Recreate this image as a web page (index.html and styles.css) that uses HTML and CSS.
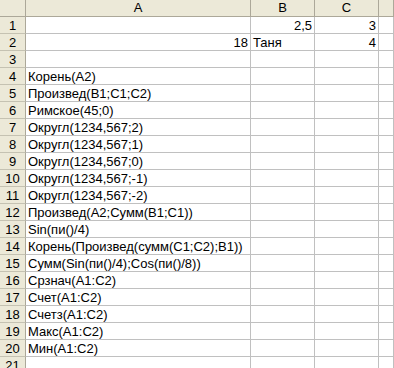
FILE: index.html
```
<!DOCTYPE html>
<html lang="ru">
<head>
    <meta charset="UTF-8">
    <meta name="viewport" content="width=device-width, initial-scale=1.0">
    <title>Лист1</title>
    <link rel="stylesheet" href="styles.css">
</head>
<body>
    <div class="sheet">
        <div class="row head">
            <div class="corner"></div>
            <div class="col-head">A</div>
            <div class="col-head">B</div>
            <div class="col-head">C</div>
            <div class="col-head"></div>
        </div>
        <div class="row"><div class="num">1</div><div class="cell"></div><div class="cell right">2,5</div><div class="cell right">3</div><div class="cell"></div></div>
        <div class="row"><div class="num">2</div><div class="cell right">18</div><div class="cell">Таня</div><div class="cell right">4</div><div class="cell"></div></div>
        <div class="row"><div class="num">3</div><div class="cell"></div><div class="cell"></div><div class="cell"></div><div class="cell"></div></div>
        <div class="row"><div class="num">4</div><div class="cell">Корень(A2)</div><div class="cell"></div><div class="cell"></div><div class="cell"></div></div>
        <div class="row"><div class="num">5</div><div class="cell">Произвед(B1;C1;C2)</div><div class="cell"></div><div class="cell"></div><div class="cell"></div></div>
        <div class="row"><div class="num">6</div><div class="cell">Римское(45;0)</div><div class="cell"></div><div class="cell"></div><div class="cell"></div></div>
        <div class="row"><div class="num">7</div><div class="cell">Округл(1234,567;2)</div><div class="cell"></div><div class="cell"></div><div class="cell"></div></div>
        <div class="row"><div class="num">8</div><div class="cell">Округл(1234,567;1)</div><div class="cell"></div><div class="cell"></div><div class="cell"></div></div>
        <div class="row"><div class="num">9</div><div class="cell">Округл(1234,567;0)</div><div class="cell"></div><div class="cell"></div><div class="cell"></div></div>
        <div class="row"><div class="num">10</div><div class="cell">Округл(1234,567;-1)</div><div class="cell"></div><div class="cell"></div><div class="cell"></div></div>
        <div class="row"><div class="num">11</div><div class="cell">Округл(1234,567;-2)</div><div class="cell"></div><div class="cell"></div><div class="cell"></div></div>
        <div class="row"><div class="num">12</div><div class="cell">Произвед(A2;Сумм(B1;C1))</div><div class="cell"></div><div class="cell"></div><div class="cell"></div></div>
        <div class="row"><div class="num">13</div><div class="cell">Sin(пи()/4)</div><div class="cell"></div><div class="cell"></div><div class="cell"></div></div>
        <div class="row"><div class="num">14</div><div class="cell">Корень(Произвед(сумм(C1;C2);B1))</div><div class="cell"></div><div class="cell"></div><div class="cell"></div></div>
        <div class="row"><div class="num">15</div><div class="cell">Сумм(Sin(пи()/4);Cos(пи()/8))</div><div class="cell"></div><div class="cell"></div><div class="cell"></div></div>
        <div class="row"><div class="num">16</div><div class="cell">Срзнач(A1:C2)</div><div class="cell"></div><div class="cell"></div><div class="cell"></div></div>
        <div class="row"><div class="num">17</div><div class="cell">Счет(A1:C2)</div><div class="cell"></div><div class="cell"></div><div class="cell"></div></div>
        <div class="row"><div class="num">18</div><div class="cell">Счетз(A1:C2)</div><div class="cell"></div><div class="cell"></div><div class="cell"></div></div>
        <div class="row"><div class="num">19</div><div class="cell">Макс(A1:C2)</div><div class="cell"></div><div class="cell"></div><div class="cell"></div></div>
        <div class="row"><div class="num">20</div><div class="cell">Мин(A1:C2)</div><div class="cell"></div><div class="cell"></div><div class="cell"></div></div>
        <div class="row"><div class="num">21</div><div class="cell"></div><div class="cell"></div><div class="cell"></div><div class="cell"></div></div>
    </div>
</body>
</html>
```
FILE: styles.css
```
html, body {
    margin: 0;
    padding: 0;
    height: 100%;
    overflow: hidden;
    background-color: white;
}
.sheet {
    font-family: 'Liberation Sans', Arial, sans-serif;
    font-size: 13px;
    color: #000;
}
.row {
    display: grid;
    grid-template-columns: 26px 225px 64px 64px 1fr;
    height: 17px;
}
.row > div {
    box-sizing: border-box;
    height: 17px;
    line-height: 16px;
    white-space: nowrap;
    overflow: visible;
}
.cell {
    border-right: 1px solid #c0c0c0;
    border-bottom: 1px solid #c0c0c0;
    padding: 1px 2px 0 2px;
}
.cell.right {
    text-align: right;
}
.corner,
.col-head,
.num {
    background-color: #ece9d8;
    border-right: 1px solid #aca899;
    border-bottom: 1px solid #aca899;
    text-align: center;
}
.col-head {
    padding-top: 0;
}
.num {
    padding-top: 1px;
    border-bottom-color: #c5c2b2;
}
.head > div {
    height: 17px;
}
```
